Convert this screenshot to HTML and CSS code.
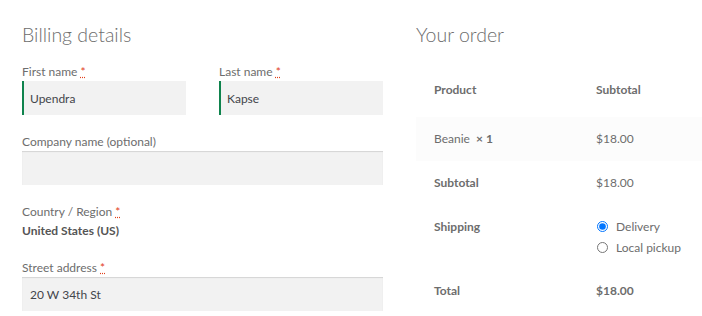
FILE: index.html
```html
<!DOCTYPE html>
<html lang="en">
<head>
    <meta charset="UTF-8">
    <meta name="viewport" content="width=device-width, initial-scale=1.0">
    <title>Checkout</title>
    <link rel="stylesheet" href="styles.css">
</head>
<body>
    <div class="checkout">
        <div class="billing">
            <h3>Billing details</h3>

            <div class="row-split">
                <p class="form-row">
                    <label>First name <abbr class="required" title="required">*</abbr></label>
                    <input type="text" class="input-text valid" value="Upendra">
                </p>
                <p class="form-row">
                    <label>Last name <abbr class="required" title="required">*</abbr></label>
                    <input type="text" class="input-text valid" value="Kapse">
                </p>
            </div>

            <p class="form-row">
                <label>Company name (optional)</label>
                <input type="text" class="input-text" value="">
            </p>

            <p class="form-row country">
                <label>Country / Region <abbr class="required" title="required">*</abbr></label>
                <strong>United States (US)</strong>
            </p>

            <p class="form-row">
                <label>Street address <abbr class="required" title="required">*</abbr></label>
                <input type="text" class="input-text" value="20 W 34th St">
            </p>
        </div>

        <div class="order">
            <h3>Your order</h3>
            <table class="order-table">
                <thead>
                    <tr>
                        <th class="col-name">Product</th>
                        <th>Subtotal</th>
                    </tr>
                </thead>
                <tbody>
                    <tr class="cart-item">
                        <td>Beanie&nbsp; <strong class="qty">&times;&nbsp;1</strong></td>
                        <td>$18.00</td>
                    </tr>
                </tbody>
                <tfoot>
                    <tr>
                        <th>Subtotal</th>
                        <td>$18.00</td>
                    </tr>
                    <tr>
                        <th>Shipping</th>
                        <td>
                            <ul class="shipping-methods">
                                <li><input type="radio" name="ship" checked> <label>Delivery</label></li>
                                <li><input type="radio" name="ship"> <label>Local pickup</label></li>
                            </ul>
                        </td>
                    </tr>
                    <tr>
                        <th>Total</th>
                        <td><strong>$18.00</strong></td>
                    </tr>
                </tfoot>
            </table>
        </div>
    </div>
</body>
</html>
```

FILE: styles.css
```css
body {
    margin: 0;
    font-family: Lato, "Noto Sans", sans-serif;
    font-size: 12px;
    line-height: 22px;
    color: #6d6d6d;
    background: #ffffff;
    overflow: hidden;
}

.checkout {
    display: flex;
    gap: 33px;
    padding: 0 0 0 22px;
}

.billing {
    width: 361px;
    flex: none;
}

.order {
    flex: none;
    width: 320px;
}

h3 {
    margin: 22px 0 15px;
    font-size: 19.5px;
    font-weight: 300;
    line-height: 26px;
    color: #6d6d6d;
}

.row-split {
    display: flex;
    gap: 33px;
}

.row-split .form-row {
    flex: 1;
}

.form-row {
    margin: 0 0 18px;
}

.form-row label {
    display: block;
    line-height: 18px;
}

.required {
    color: #e2401c;
    text-decoration: underline dotted;
    border: none;
}

.input-text {
    display: block;
    box-sizing: border-box;
    width: 100%;
    height: 34px;
    padding: 0 8px;
    border: 0;
    background: #f2f2f2;
    box-shadow: inset 0 1px 1px rgba(0,0,0,.125);
    font-family: inherit;
    font-size: 12px;
    color: #43454b;
    outline: none;
}

.input-text.valid {
    box-shadow: inset 2px 0 0 #0f834d;
}

.country strong {
    display: block;
    line-height: 20px;
    color: #555;
}

.order h3 {
    margin-bottom: 11px;
}

.order-table {
    width: 100%;
    border-collapse: collapse;
    border-spacing: 0;
}

.order-table th,
.order-table td {
    text-align: left;
    vertical-align: top;
    padding: 11px 18px;
}

.order-table th {
    font-weight: 700;
}

.order-table thead th {
    padding: 20px 18px 16px;
}

.col-name {
    width: 126px;
}

.cart-item td {
    background: #fcfcfc;
}

.qty {
    font-weight: 700;
}

.shipping-methods {
    list-style: none;
    margin: 0;
    padding: 0;
}

.shipping-methods li {
    display: flex;
    align-items: center;
    gap: 4px;
    line-height: 21px;
}

.shipping-methods input {
    margin: 0 4px 0 1px;
    width: 11px;
    height: 11px;
}
```
